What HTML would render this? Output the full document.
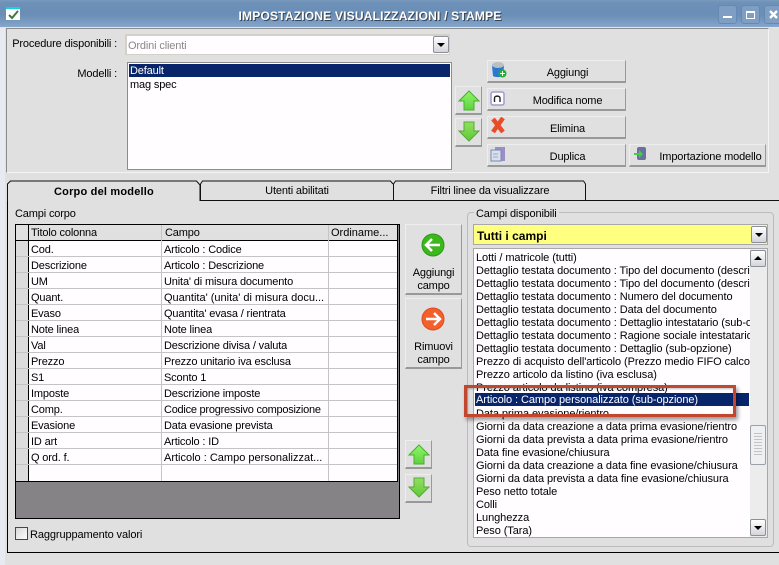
<!DOCTYPE html>
<html><head><meta charset="utf-8"><style>
html,body{margin:0;padding:0}
body{width:779px;height:565px;overflow:hidden;background:#e0e0e0;position:relative;font:11px "Liberation Sans",sans-serif;letter-spacing:-.15px;color:#000}
.a{position:absolute}
.t{position:absolute;white-space:nowrap;line-height:13px}
.b{position:absolute;box-sizing:border-box;background:#e0e0e0;border:1px solid;border-color:#eee #999 #999 #eee;border-bottom-width:2px;text-align:center;line-height:25px}
.r{position:absolute;left:476px;white-space:nowrap;line-height:13px;width:274px;overflow:hidden;letter-spacing:-.08px}
.g{position:absolute;white-space:nowrap;line-height:15px;overflow:hidden}
.h{position:absolute;background:#c4c4c4}
svg{position:absolute}
.dd{position:absolute;box-sizing:border-box;width:16px;height:17px;background:linear-gradient(#fff,#d4d4dc);border:1px solid #8a8f98;border-radius:2px}
.dd:after{content:"";position:absolute;left:3px;top:6px;border:4px solid transparent;border-top:4px solid #000;border-bottom:0}
.du:after{border-top:0;border-bottom:4px solid #000;top:5px}
</style></head><body>
<div class="a" style="left:0;top:0;width:779px;height:27px;background:linear-gradient(#7a9abd 0,#6c90b8 3px,#6a8eb6 15px,#86a6cb 27px)"></div>
<div class="a" style="left:0;top:27px;width:779px;height:1px;background:#dfe6ee"></div>
<div class="a" style="left:0;top:28px;width:5px;height:537px;background:#e8eaf0"></div>
<div class="a" style="left:6px;top:7px;width:14px;height:13px;background:#fff;border-top:2px solid #12d4e0;box-sizing:border-box"></div>
<svg style="left:6px;top:7px" width="14" height="13"><path d="M3 8l3 3 6-7" fill="none" stroke="#3c7a3c" stroke-width="2"/></svg>
<div class="t" style="left:225px;top:10px;width:290px;text-align:center;color:#fff;font-weight:bold;font-size:12px;letter-spacing:.2px;text-shadow:1px 1px 0 #3a4450">IMPOSTAZIONE VISUALIZZAZIONI / STAMPE</div>
<div class="a" style="left:718px;top:5px;width:19px;height:19px;box-sizing:border-box;border:1px solid #648ab4;border-radius:3px;background:#7e9ec4"></div>
<div class="a" style="left:723px;top:16px;width:9px;height:2px;background:#fff"></div>
<div class="a" style="left:741px;top:5px;width:19px;height:19px;box-sizing:border-box;border:1px solid #648ab4;border-radius:3px;background:#7e9ec4"></div>
<div class="a" style="left:746px;top:11px;width:9px;height:8px;box-sizing:border-box;border:1px solid #fff;border-top-width:2px"></div>
<div class="a" style="left:764px;top:5px;width:19px;height:19px;box-sizing:border-box;border:1px solid #648ab4;border-radius:3px;background:#7e9ec4"></div>
<svg style="left:769px;top:10px" width="10" height="10"><path d="M1 1l7 7M8 1l-7 7" stroke="#fff" stroke-width="2.4"/></svg>

<div class="a" style="left:6px;top:28px;width:763px;height:145px;box-sizing:border-box;border:1px solid;border-color:#8c8c8c #f4f4f4 #f4f4f4 #8c8c8c"></div>
<div class="t" style="right:662px;top:38px">Procedure disponibili :</div>
<div class="a" style="left:125px;top:34px;width:325px;height:21px;box-sizing:border-box;background:#fffdff;border:1px solid #d4d0c8;border-width:2px 1px 1px 2px"></div>
<div class="t" style="left:128px;top:40px;color:#8a8a8a">Ordini clienti</div>
<div class="dd" style="left:433px;top:36px"></div>
<div class="t" style="right:662px;top:68px">Modelli :</div>
<div class="a" style="left:127px;top:62px;width:325px;height:108px;box-sizing:border-box;background:#fffdff;border:1px solid #8c8c8c"></div>
<div class="a" style="left:129px;top:64px;width:321px;height:13px;background:#08246b"></div>
<div class="t" style="left:130px;top:65px;color:#fff">Default</div>
<div class="t" style="left:130px;top:79px">mag spec</div>

<div class="b" style="left:487px;top:60px;width:139px;height:23px;padding-left:22px">Aggiungi</div>
<div class="b" style="left:487px;top:88px;width:139px;height:23px;padding-left:22px">Modifica nome</div>
<div class="b" style="left:487px;top:116px;width:139px;height:23px;padding-left:22px">Elimina</div>
<div class="b" style="left:487px;top:144px;width:139px;height:23px;padding-left:22px">Duplica</div>
<div class="b" style="left:629px;top:144px;width:137px;height:23px;padding-left:26px">Importazione modello</div>
<svg style="left:491px;top:61px" width="16" height="17"><path d="M1 5h12l-1 10c-2 1.500-8 1.500-10 0z" fill="#2a78d0"/><ellipse cx="7" cy="4" rx="6" ry="3" fill="#b8c0c4"/><circle cx="11.500" cy="12.500" r="4" fill="#2aa838"/><path d="M9 12.500h5M11.500 10v5" stroke="#fff"/></svg>
<svg style="left:490px;top:91px" width="16" height="15"><rect x="1" y="1" width="13" height="13" rx="2" fill="#fff" stroke="#a09ad0" stroke-width="1.500"/><path d="M4.500 11V7c0-2.500 5.500-2.500 5.500 0v4" fill="none" stroke="#222" stroke-width="1.400"/></svg>
<svg style="left:490px;top:117px" width="16" height="17"><path d="M3 2l10 13M13 1L3 15" stroke="#e84c28" stroke-width="4.500"/></svg>
<svg style="left:490px;top:146px" width="16" height="16"><rect x="5" y="1" width="10" height="14" fill="#9a8fc4"/><rect x="1" y="4" width="10" height="11" fill="#d8e0f0" stroke="#7888b0"/><path d="M3 8h5M3 11h5" stroke="#9ab"/></svg>
<svg style="left:633px;top:146px" width="16" height="15"><rect x="4" y="1" width="9" height="13" rx="2" fill="#6a70a0"/><path d="M1 7h5V4l4 4-4 4V9H1z" fill="#3fd040"/></svg>

<div class="b" style="left:455px;top:86px;width:27px;height:29px"></div>
<div class="b" style="left:455px;top:118px;width:27px;height:29px"></div>
<svg width="0" height="0"><defs><linearGradient id="u" x1="0" y1="0" x2="0" y2="1"><stop offset="0" stop-color="#8cf868"/><stop offset="1" stop-color="#60d040"/></linearGradient><linearGradient id="d" x1="0" y1="0" x2="0" y2="1"><stop offset="0" stop-color="#90e060"/><stop offset="1" stop-color="#60c838"/></linearGradient></defs></svg>
<svg style="left:458px;top:90px" width="22" height="22"><path d="M11 1l10 10h-5v9H6v-9H1z" fill="url(#u)" stroke="#4cac30"/></svg>
<svg style="left:458px;top:121px" width="22" height="22"><path d="M6 1h10v9h5L11 20 1 10h5z" fill="url(#d)" stroke="#58a838"/></svg>

<div class="a" style="left:7px;top:200px;width:772px;height:353px;box-sizing:border-box;border:1px solid #000;border-width:0 0 1px 1px;background:#e0e0e0"></div>
<div class="a" style="left:200px;top:200px;width:579px;height:1px;background:#111"></div>
<svg style="left:0;top:178px" width="600" height="24"><path d="M7.500 23V6l3-3h186l3.500 4v16M200.500 22V6l2-3h188l2.500 3M393.500 22V6l2-3h188l2 3v16" fill="#e0e0e0" stroke="#111"/></svg>
<div class="t" style="left:7px;top:186px;width:194px;text-align:center;font-weight:bold;letter-spacing:.2px">Corpo del modello</div>
<div class="t" style="left:201px;top:185px;width:192px;text-align:center">Utenti abilitati</div>
<div class="t" style="left:394px;top:185px;width:192px;text-align:center">Filtri linee da visualizzare</div>

<div class="t" style="left:15px;top:208px">Campi corpo</div>
<div class="a" style="left:15px;top:224px;width:385px;height:295px;box-sizing:border-box;border:1px solid #000;background:#858385"></div>
<div class="a" style="left:16px;top:225px;width:381px;height:256px;background:#fffdff;border-right:1px solid #000;border-bottom:1px solid #000"></div>
<div class="a" style="left:16px;top:225px;width:381px;height:16px;background:#e0e0e0;box-sizing:border-box;border-bottom:1px solid #000"></div>
<div class="a" style="left:16px;top:241px;width:12px;height:240px;background:#dcdcdc"></div>
<div class="a" style="left:28px;top:225px;width:1px;height:256px;background:#000"></div>
<div class="h" style="left:161px;top:225px;width:1px;height:256px"></div>
<div class="h" style="left:328px;top:225px;width:1px;height:256px"></div>
<div class="h" style="left:16px;top:256px;width:381px;height:1px"></div>
<div class="h" style="left:16px;top:272px;width:381px;height:1px"></div>
<div class="h" style="left:16px;top:288px;width:381px;height:1px"></div>
<div class="h" style="left:16px;top:304px;width:381px;height:1px"></div>
<div class="h" style="left:16px;top:320px;width:381px;height:1px"></div>
<div class="h" style="left:16px;top:336px;width:381px;height:1px"></div>
<div class="h" style="left:16px;top:352px;width:381px;height:1px"></div>
<div class="h" style="left:16px;top:368px;width:381px;height:1px"></div>
<div class="h" style="left:16px;top:384px;width:381px;height:1px"></div>
<div class="h" style="left:16px;top:400px;width:381px;height:1px"></div>
<div class="h" style="left:16px;top:416px;width:381px;height:1px"></div>
<div class="h" style="left:16px;top:432px;width:381px;height:1px"></div>
<div class="h" style="left:16px;top:448px;width:381px;height:1px"></div>
<div class="h" style="left:16px;top:464px;width:381px;height:1px"></div>
<div class="g" style="left:31px;top:226px">Titolo colonna</div><div class="g" style="left:165px;top:226px">Campo</div><div class="g" style="left:331px;top:226px;width:64px;letter-spacing:0">Ordiname...</div>
<div class="g" style="left:31px;top:243px">Cod.</div><div class="g" style="left:164px;top:243px">Articolo : Codice</div>
<div class="g" style="left:31px;top:259px">Descrizione</div><div class="g" style="left:164px;top:259px">Articolo : Descrizione</div>
<div class="g" style="left:31px;top:275px">UM</div><div class="g" style="left:164px;top:275px">Unita' di misura documento</div>
<div class="g" style="left:31px;top:291px">Quant.</div><div class="g" style="left:164px;top:291px;width:163px;letter-spacing:0">Quantita' (unita' di misura docu...</div>
<div class="g" style="left:31px;top:307px">Evaso</div><div class="g" style="left:164px;top:307px">Quantita' evasa / rientrata</div>
<div class="g" style="left:31px;top:323px">Note linea</div><div class="g" style="left:164px;top:323px">Note linea</div>
<div class="g" style="left:31px;top:339px">Val</div><div class="g" style="left:164px;top:339px">Descrizione divisa / valuta</div>
<div class="g" style="left:31px;top:355px">Prezzo</div><div class="g" style="left:164px;top:355px">Prezzo unitario iva esclusa</div>
<div class="g" style="left:31px;top:371px">S1</div><div class="g" style="left:164px;top:371px">Sconto 1</div>
<div class="g" style="left:31px;top:387px">Imposte</div><div class="g" style="left:164px;top:387px">Descrizione imposte</div>
<div class="g" style="left:31px;top:403px">Comp.</div><div class="g" style="left:164px;top:403px;letter-spacing:-.25px">Codice progressivo composizione</div>
<div class="g" style="left:31px;top:419px">Evasione</div><div class="g" style="left:164px;top:419px">Data evasione prevista</div>
<div class="g" style="left:31px;top:435px">ID art</div><div class="g" style="left:164px;top:435px">Articolo : ID</div>
<div class="g" style="left:31px;top:451px">Q ord. f.</div><div class="g" style="left:164px;top:451px;width:163px;letter-spacing:0">Articolo : Campo personalizzat...</div>

<div class="a" style="left:15px;top:527px;width:13px;height:13px;box-sizing:border-box;border:1px solid #1f4f80;background:linear-gradient(135deg,#d8d8d8,#fff)"></div>
<div class="t" style="left:30px;top:529px;letter-spacing:-.1px">Raggruppamento valori</div>

<div class="b" style="left:405px;top:224px;width:57px;height:71px"></div>
<div class="t" style="left:405px;top:267px;width:57px;text-align:center;line-height:13px;white-space:normal">Aggiungi<br>campo</div>
<svg style="left:421px;top:233px" width="24" height="24"><circle cx="12" cy="12" r="11" fill="#3cb81c" stroke="#2c9a14"/><path d="M5 12h14M11 6l-6 6 6 6" fill="none" stroke="#fff" stroke-width="2.500"/></svg>
<div class="b" style="left:405px;top:298px;width:57px;height:71px"></div>
<div class="t" style="left:405px;top:341px;width:57px;text-align:center;line-height:13px;white-space:normal">Rimuovi<br>campo</div>
<svg style="left:421px;top:307px" width="24" height="24"><circle cx="12" cy="12" r="11" fill="#f4602c" stroke="#e04818"/><path d="M5 12h14M13 6l6 6-6 6" fill="none" stroke="#fff" stroke-width="2.500"/></svg>
<div class="b" style="left:405px;top:440px;width:27px;height:29px"></div>
<div class="b" style="left:405px;top:474px;width:27px;height:29px"></div>
<svg style="left:408px;top:444px" width="22" height="22"><path d="M11 1l10 10h-5v9H6v-9H1z" fill="url(#u)" stroke="#4cac30"/></svg>
<svg style="left:408px;top:477px" width="22" height="22"><path d="M6 1h10v9h5L11 20 1 10h5z" fill="url(#d)" stroke="#58a838"/></svg>

<div class="a" style="left:467px;top:212px;width:307px;height:335px;box-sizing:border-box;border:1px solid #bcbcbc;border-radius:4px"></div>
<div class="t" style="left:474px;top:208px;background:#e0e0e0;padding:0 2px">Campi disponibili</div>
<div class="a" style="left:473px;top:224px;width:295px;height:21px;box-sizing:border-box;background:#ffff80;border:1px solid #a8a8a8"></div>
<div class="t" style="left:477px;top:230px;font-weight:bold;font-size:12px;letter-spacing:0">Tutti i campi</div>
<div class="dd" style="left:751px;top:226px"></div>
<div class="a" style="left:473px;top:248px;width:295px;height:290px;box-sizing:border-box;background:#fffdff;border:1px solid #a8a8a8"></div>
<div class="a" style="left:750px;top:249px;width:17px;height:288px;background:#ececec"></div>
<div class="dd du" style="left:750px;top:250px"></div>
<div class="dd" style="left:750px;top:519px"></div>
<div class="a" style="left:750px;top:425px;width:16px;height:40px;box-sizing:border-box;background:#eef0f4;border:1px solid #9ca0a8;border-radius:2px"></div>
<div class="a" style="left:754px;top:433px;width:8px;height:22px;background:repeating-linear-gradient(#c4c4c4 0 1px,transparent 1px 3px)"></div>
<div class="r" style="top:252px">Lotti / matricole (tutti)</div>
<div class="r" style="top:265px">Dettaglio testata documento : Tipo del documento (descrizione)</div>
<div class="r" style="top:278px">Dettaglio testata documento : Tipo del documento (descrizione)</div>
<div class="r" style="top:291px">Dettaglio testata documento : Numero del documento</div>
<div class="r" style="top:304px">Dettaglio testata documento : Data del documento</div>
<div class="r" style="top:317px">Dettaglio testata documento : Dettaglio intestatario (sub-opzione)</div>
<div class="r" style="top:330px">Dettaglio testata documento : Ragione sociale intestatario</div>
<div class="r" style="top:343px">Dettaglio testata documento : Dettaglio (sub-opzione)</div>
<div class="r" style="top:356px">Prezzo di acquisto dell'articolo (Prezzo medio FIFO calcolato)</div>
<div class="r" style="top:369px">Prezzo articolo da listino (iva esclusa)</div>
<div class="r" style="top:382px">Prezzo articolo da listino (iva compresa)</div>
<div class="a" style="left:475px;top:393px;width:274px;height:13px;background:#08246b"></div>
<div class="r" style="top:394px;color:#fff">Articolo : Campo personalizzato (sub-opzione)</div>
<div class="r" style="top:408px">Data prima evasione/rientro</div>
<div class="r" style="top:421px">Giorni da data creazione a data prima evasione/rientro</div>
<div class="r" style="top:434px">Giorni da data prevista a data prima evasione/rientro</div>
<div class="r" style="top:447px">Data fine evasione/chiusura</div>
<div class="r" style="top:460px">Giorni da data creazione a data fine evasione/chiusura</div>
<div class="r" style="top:473px">Giorni da data prevista a data fine evasione/chiusura</div>
<div class="r" style="top:486px">Peso netto totale</div>
<div class="r" style="top:499px">Colli</div>
<div class="r" style="top:512px">Lunghezza</div>
<div class="r" style="top:525px">Peso (Tara)</div>
<div class="a" style="left:464px;top:385px;width:272px;height:32px;box-sizing:border-box;border:3px solid #c2472f;box-shadow:2px 3px 4px rgba(0,0,0,.4),inset 1px 1px 2px rgba(0,0,0,.25)"></div>
</body></html>
